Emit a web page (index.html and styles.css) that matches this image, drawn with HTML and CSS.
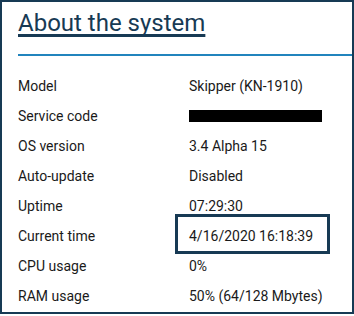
FILE: index.html
```html
<!DOCTYPE html>
<html>
  <head>
    <meta charset="UTF-8">
    <title>About the system</title>
    <link rel="stylesheet" href="styles.css">
  </head>
  <body>
    <div class="panel">
      <h1 class="title"><span>About the system</span></h1>
      <hr class="rule">
      <div class="info">
        <div class="label">Model</div>
        <div class="value">Skipper (KN-1910)</div>

        <div class="label">Service code</div>
        <div class="value"><div class="redacted"></div></div>

        <div class="label">OS version</div>
        <div class="value">3.4 Alpha 15</div>

        <div class="label">Auto-update</div>
        <div class="value">Disabled</div>

        <div class="label">Uptime</div>
        <div class="value">07:29:30</div>

        <div class="label">Current time</div>
        <div class="value"><div class="highlight">4/16/2020 16:18:39</div></div>

        <div class="label">CPU usage</div>
        <div class="value">0%</div>

        <div class="label">RAM usage</div>
        <div class="value">50% (64/128 Mbytes)</div>
      </div>
    </div>
  </body>
</html>
```

FILE: styles.css
```css
body {
  margin: 0;
  background: #fff;
  font-family: Roboto, "Liberation Sans", sans-serif;
  color: #1a1a1a;
}

.panel {
  border: 2px solid #173a54;
  padding: 6px 0 1px 16px;
  width: 354px;
  box-sizing: border-box;
}

.title {
  margin: 0;
  font-size: 24px;
  font-weight: 400;
  line-height: 30px;
  color: #173a54;
}

.title span {
  text-decoration: underline;
  text-decoration-thickness: 3px;
  text-underline-offset: 3px;
  text-decoration-skip-ink: none;
}

.rule {
  margin: 16px 0 0 0;
  border: 0;
  border-top: 2px solid #2184bd;
  height: 0;
}

.info {
  display: grid;
  grid-template-columns: 171px 1fr;
  margin-top: 15px;
  font-size: 14px;
  line-height: 30px;
}

.redacted {
  width: 133px;
  height: 12px;
  margin-top: 9px;
  background: #000;
}

.highlight {
  width: 155px;
  box-sizing: border-box;
  margin: -7px 0 -3px -14px;
  padding: 4px 11px 0 11px;
  border: 3px solid #173a54;
}
```
